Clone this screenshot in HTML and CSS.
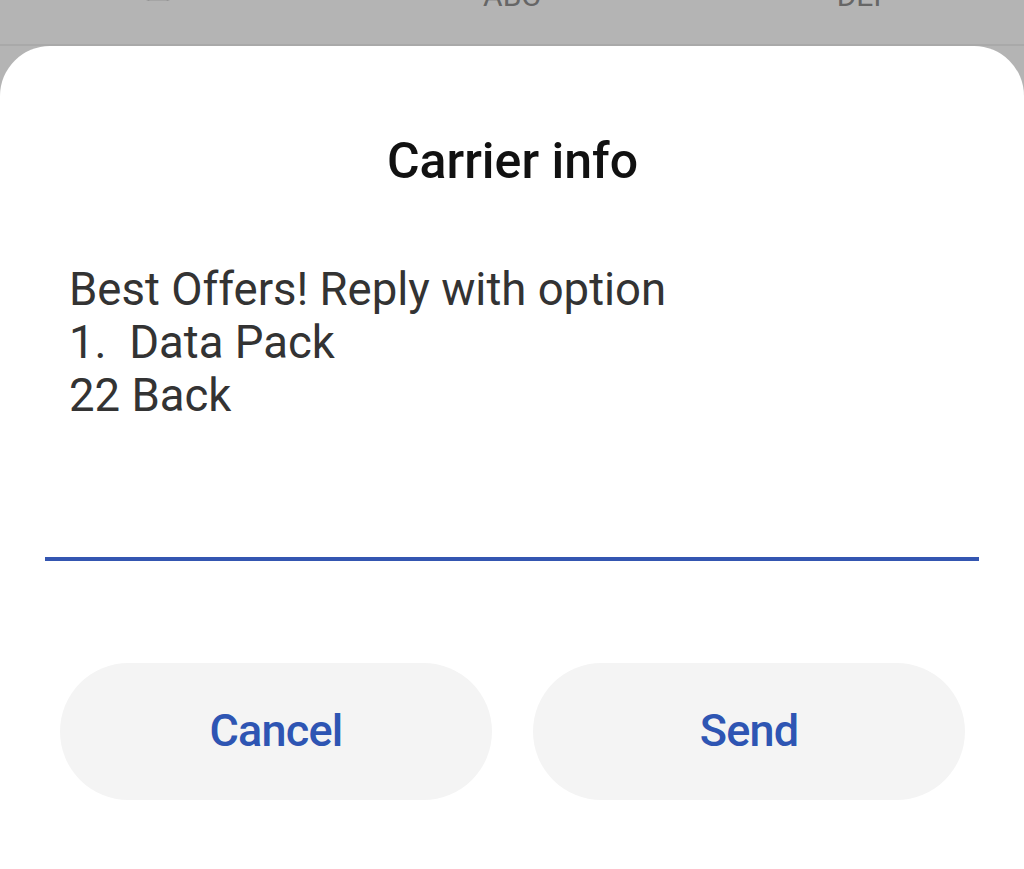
FILE: index.html
```html
<!DOCTYPE html>
<html>
<head>
<meta charset="utf-8">
<link rel="stylesheet" href="styles.css">
</head>
<body>
<div class="backdrop">
  <div class="keys">
    <div class="key">
      <svg class="vm" width="40" height="20" viewBox="0 0 40 20"><circle cx="10" cy="6" r="7" fill="none" stroke="#6a6a6a" stroke-width="2.4"/><circle cx="30" cy="6" r="7" fill="none" stroke="#6a6a6a" stroke-width="2.4"/><line x1="10" y1="13" x2="30" y2="13" stroke="#6a6a6a" stroke-width="2.4"/></svg>
    </div>
    <div class="key"><span class="letters">ABC</span></div>
    <div class="key"><span class="letters">DEF</span></div>
  </div>
</div>
<div class="sheet">
  <h1 class="title">Carrier info</h1>
  <div class="field">
    <div class="message">Best Offers! Reply with option<br>1.&nbsp; Data Pack<br>22 Back</div>
  </div>
  <div class="actions">
    <button class="btn">Cancel</button>
    <button class="btn">Send</button>
  </div>
</div>
</body>
</html>
```

FILE: styles.css
```css
html, body {
  margin: 0;
  padding: 0;
  height: 100%;
}
body {
  background: #b4b4b4;
  font-family: Roboto, "Noto Sans", "Liberation Sans", sans-serif;
  overflow: hidden;
  display: flex;
  flex-direction: column;
}
.backdrop {
  height: 44px;
  overflow: hidden;
  border-bottom: 2px solid #a9a9a9;
  flex: none;
}
.keys {
  display: grid;
  grid-template-columns: 1fr 1fr 1fr;
  margin-top: -22px;
}
.key {
  display: flex;
  justify-content: center;
  height: 30px;
  align-items: flex-end;
}
.key:first-child {
  justify-content: flex-start;
  padding-left: 138px;
}
.key:nth-child(3) {
  padding-left: 20px;
}
.vm {
  display: block;
  margin-bottom: 2px;
}
.letters {
  color: #666;
  font-size: 30px;
  line-height: 30px;
  display: block;
  margin-bottom: -3px;
}
.sheet {
  flex: 1;
  background: #fff;
  border-radius: 50px 50px 0 0;
  padding: 0 59px 0 60px;
  display: flex;
  flex-direction: column;
}
.title {
  margin: 85px 0 0 0;
  text-align: center;
  font-size: 50px;
  line-height: 60px;
  font-weight: 500;
  color: #111;
}
.field {
  margin: 72px -14px 0 -15px;
  padding: 0 22px 0 24px;
  height: 294px;
  border-bottom: 4px solid #3456b1;
  flex: none;
}
.message {
  font-size: 45.5px;
  line-height: 53px;
  color: #333;
}
.actions {
  display: flex;
  gap: 41px;
  margin-top: 102px;
}
.btn {
  flex: 1;
  height: 137px;
  border: none;
  border-radius: 69px;
  background: #f4f4f4;
  color: #2e55b3;
  font-family: Roboto, "Noto Sans", "Liberation Sans", sans-serif;
  font-weight: 500;
  font-size: 45px;
  letter-spacing: -0.8px;
  padding: 0 0 2px 0;
}
```
